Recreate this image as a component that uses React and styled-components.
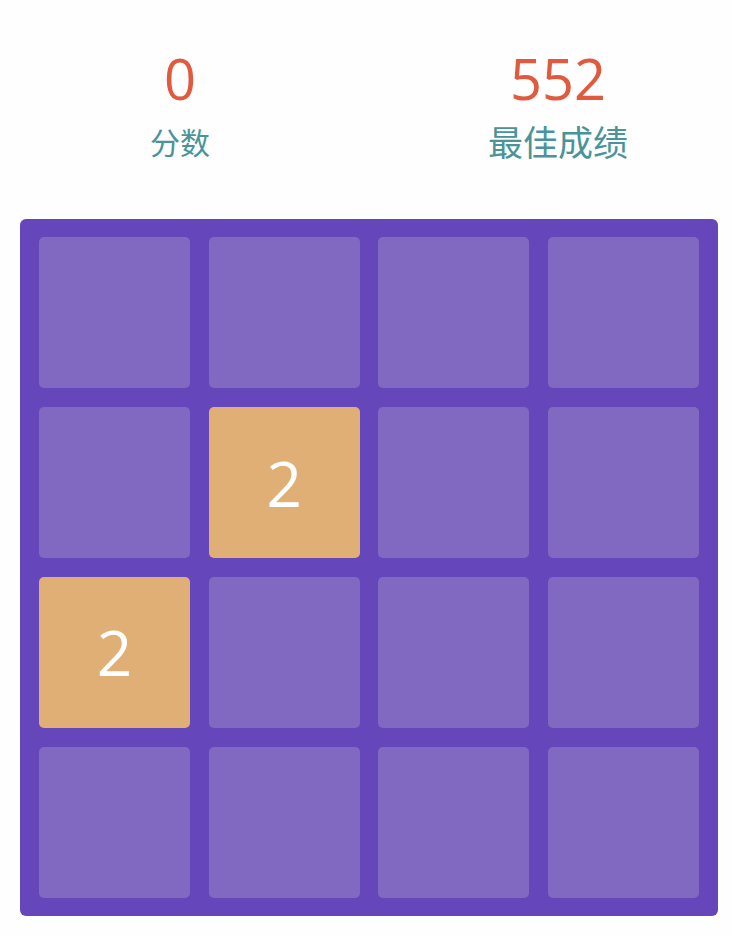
import React from 'react'
import styled, { createGlobalStyle } from 'styled-components';

const GlobalStyle = createGlobalStyle`
  html, body {
    margin: 0;
    padding: 0;
    background-color: #fefefe;
  }
  body {
    font-family: "Open Sans", "Noto Sans CJK SC", sans-serif;
  }
`;

const Page = styled.div`
  width: 732px;
  height: 936px;
  padding-top: 40px;
  box-sizing: border-box;
`;

const ScoreBar = styled.div`
  display: grid;
  grid-template-columns: 360px 348px;
  column-gap: 24px;
  height: 179px;
`;

const ScoreBox = styled.div`
  display: flex;
  flex-direction: column;
  align-items: center;
`;

const ScoreValue = styled.div`
  color: #e05a3e;
  font-size: 56px;
  line-height: 76px;
`;

const ScoreLabel = styled.div`
  margin-top: 5px;
  color: #4a9499;
  font-family: "Noto Sans CJK SC", sans-serif;
  font-size: ${p => p.$size}px;
  line-height: 40px;
`;

const Board = styled.div`
  margin-left: 20px;
  width: 698px;
  height: 697px;
  box-sizing: border-box;
  padding: 18px 19px;
  background-color: #6647bb;
  border-radius: 6px;
  display: grid;
  grid-template-columns: repeat(4, 1fr);
  grid-template-rows: repeat(4, 1fr);
  gap: 18.5px;
`;

const Tile = styled.div`
  border-radius: 5px;
  background-color: ${p => (p.$value ? '#dfaf76' : '#8169c2')};
  color: #ffffff;
  font-size: 62px;
  display: flex;
  align-items: center;
  justify-content: center;
`;

const cells = [
  0, 0, 0, 0,
  0, 2, 0, 0,
  2, 0, 0, 0,
  0, 0, 0, 0,
];

export default function App() {
  return (
    <Page>
      <GlobalStyle />
      <ScoreBar>
        <ScoreBox>
          <ScoreValue>0</ScoreValue>
          <ScoreLabel $size={30}>分数</ScoreLabel>
        </ScoreBox>
        <ScoreBox>
          <ScoreValue>552</ScoreValue>
          <ScoreLabel $size={35}>最佳成绩</ScoreLabel>
        </ScoreBox>
      </ScoreBar>
      <Board>
        {cells.map((v, i) => (
          <Tile key={i} $value={v}>{v ? v : ''}</Tile>
        ))}
      </Board>
    </Page>
  )
}
